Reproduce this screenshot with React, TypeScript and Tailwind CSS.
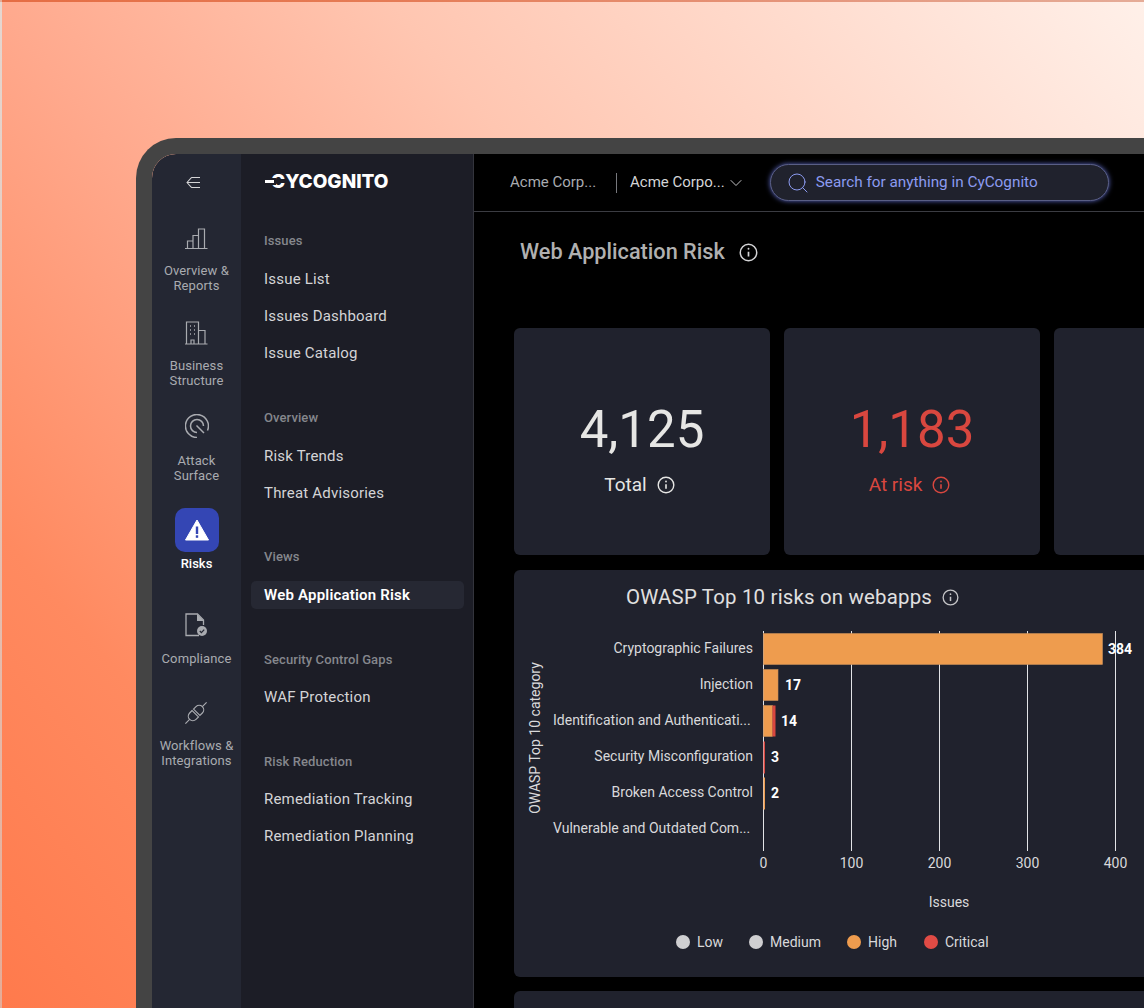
import React from "react";
import { ChevronDown, Search } from "lucide-react";

const DIN = "font-['Roboto',sans-serif]";

function InfoIcon({ className }: { className?: string }) {
  return (
    <svg viewBox="0 0 18 18" fill="none" stroke="currentColor" strokeWidth="1.4" className={className}>
      <circle cx="9" cy="9" r="7.8" />
      <path d="M9 8.2v4.6" strokeWidth="1.6" />
      <circle cx="9" cy="5.5" r="0.9" fill="currentColor" stroke="none" />
    </svg>
  );
}

const railStroke = { fill: "none", stroke: "currentColor", strokeWidth: 1.2 };

const BarsIcon = () => (
  <svg viewBox="0 0 24 24" className="w-6 h-6" {...railStroke}>
    <path d="M1 22.5h22.5M3.5 22.5V15H9v7.5M9 22.5v-13h5.5v13M14.5 22.5V3h6v19.5" />
  </svg>
);
const BuildingIcon = () => (
  <svg viewBox="0 0 24 24" className="w-6 h-6" {...railStroke}>
    <path d="M1 23h22.5M2.5 23V1h12v22M14.5 9.5H21V23M7 23v-4h3v4" />
    <path d="M6 5h1M10 5h1M6 9h1M10 9h1M6 13h1M10 13h1" strokeWidth="1.5" />
  </svg>
);
const TargetIcon = () => (
  <svg viewBox="0 0 24 24" className="w-6 h-6" {...railStroke} strokeWidth="1.5">
    <path d="M12 23.5A11.5 11.5 0 1 1 22.5 16.5" />
    <path d="M12 18.5A6.5 6.5 0 1 1 18.5 12" />
    <path d="M11.5 11.5l7.5 7.5" />
  </svg>
);
const FileCheckIcon = () => (
  <svg viewBox="0 0 24 24" className="w-6 h-6">
    <path d="M15 22.5H2V1h11.5l6 6v5" fill="none" stroke="currentColor" strokeWidth="1.3" />
    <path d="M13 1l7 7h-7z" fill="currentColor" />
    <circle cx="18" cy="18" r="5" fill="currentColor" />
    <path d="M15.8 18l1.6 1.6 2.8-3" fill="none" stroke="#242733" strokeWidth="1.3" />
  </svg>
);
const PlugIcon = () => (
  <svg viewBox="0 0 24 24" className="w-6 h-6 overflow-visible" {...railStroke}>
    <g transform="rotate(45 12 12)">
      <path d="M7.5 11V7.5a4.5 4.5 0 0 1 9 0V11z" />
      <path d="M7.5 13v3.500a4.500 4.500 0 0 0 9 0V13z" />
      <path d="M12 3V-3M12 21v6" />
    </g>
  </svg>
);

function RailItem({ icon, label, className, gap }: { icon: React.ReactNode; label: string[]; className: string; gap: string }) {
  return (
    <div className={`flex flex-col items-center text-[#a9abb0] ${className}`}>
      {icon}
      <div className={`${gap} text-[13px] leading-[15px] text-center tracking-[0.1px]`}>
        {label.map((l) => (
          <div key={l}>{l}</div>
        ))}
      </div>
    </div>
  );
}

function NavGroup({
  title,
  items,
  active,
  className,
  listGap = "mt-[13px]",
}: {
  title: string;
  items: string[];
  active?: string;
  className?: string;
  listGap?: string;
}) {
  return (
    <div className={className}>
      <div className="h-[16px] leading-[16px] pl-[23px] text-[13px] tracking-[0.1px] font-medium text-[#85878d]">{title}</div>
      <div className={`${listGap} flex flex-col gap-[3px]`}>
        {items.map((i) => (
          <div
            key={i}
            className={
              i === active
                ? "h-[28px] my-[3px] leading-[28px] ml-[10px] mr-[9px] pl-[13px] rounded-[5px] bg-[#262833] text-white text-[15px] tracking-[0.2px] font-semibold"
                : "h-[34px] leading-[34px] pl-[23px] text-[15px] tracking-[0.2px] text-[#d4d4d6]"
            }
          >
            {i}
          </div>
        ))}
      </div>
    </div>
  );
}

function StatCard({ value, label, tone }: { value: string; label: string; tone: string }) {
  return (
    <div className={`w-[256px] h-[227px] shrink-0 rounded-[6px] bg-[#20222d] flex flex-col items-center pt-[71px] ${tone}`}>
      <div className="text-[51px] leading-[62px] font-normal">{value}</div>
      <div className="mt-[12px] pr-[5px] flex items-center gap-[10px] text-[19px] leading-[24px]">
        {label}
        <InfoIcon className="w-[18px] h-[18px]" />
      </div>
    </div>
  );
}

const rows = [
  { name: "Cryptographic Failures", y: 648, value: "384", vx: 1108 },
  { name: "Injection", y: 684, value: "17", vx: 785 },
  { name: "Identification and Authenticati...", y: 720, value: "14", vx: 781 },
  { name: "Security Misconfiguration", y: 756, value: "3", vx: 771 },
  { name: "Broken Access Control", y: 792, value: "2", vx: 771 },
  { name: "Vulnerable and Outdated Com...", y: 828 },
];

function OwaspChart() {
  const ticks = [
    { x: 763.5, t: "0" },
    { x: 851.5, t: "100" },
    { x: 939.5, t: "200" },
    { x: 1027.5, t: "300" },
    { x: 1115.5, t: "400" },
  ];
  return (
    <svg width="640" height="407" viewBox="514 570 640 407" className="block font-['Roboto',sans-serif]">
      {ticks.map((t) => (
        <g key={t.t}>
          <line x1={t.x} x2={t.x} y1="631" y2="851" stroke="#e2e3e6" strokeWidth="1" />
          <text x={t.x} y="868" textAnchor="middle" fontSize="14" fill="#d9d9db">
            {t.t}
          </text>
        </g>
      ))}
      <g stroke="#c98f5a" strokeWidth="0.6">
        <rect x="763.5" y="633.5" width="339" height="31" fill="#ee9c4e" />
        <rect x="763.5" y="669.5" width="14.5" height="31" fill="#ee9c4e" />
        <rect x="763.5" y="705.5" width="9" height="31" fill="#ee9c4e" />
      </g>
      <rect x="772.5" y="705.5" width="3" height="31" fill="#d9473f" />
      <rect x="763.5" y="741.5" width="1.5" height="32" fill="#d9473f" />
      <rect x="763.5" y="777.5" width="1.5" height="32" fill="#ee9c4e" />
      {rows.map((r) => (
        <g key={r.name}>
          <text
            x={r.name.endsWith("...") ? 553 : 753}
            y={r.y + 5}
            textAnchor={r.name.endsWith("...") ? "start" : "end"}
            fontSize="14"
            fill="#d9d9db"
          >
            {r.name}
          </text>
          {r.value && (
            <text x={r.vx} y={r.y + 6} fontSize="14" fontWeight="700" fill="#fff">
              {r.value}
            </text>
          )}
        </g>
      ))}
      <text transform="translate(540 738) rotate(-90)" textAnchor="middle" fontSize="14" fill="#d9d9db">
        OWASP Top 10 category
      </text>
      <text x="949" y="907" textAnchor="middle" fontSize="14" fill="#d9d9db">
        Issues
      </text>
    </svg>
  );
}

function Legend() {
  const items = [
    { c: "bg-[#cfcfd1]", t: "Low", w: "w-[73px]" },
    { c: "bg-[#cfcfd1]", t: "Medium", w: "w-[98px]" },
    { c: "bg-[#ee9c4e]", t: "High", w: "w-[77px]" },
    { c: "bg-[#e04b45]", t: "Critical", w: "w-[80px]" },
  ];
  return (
    <div className="absolute left-[162px] top-[364px] flex items-center font-['Roboto',sans-serif]">
      {items.map((i) => (
        <div key={i.t} className={`flex items-center gap-[7px] ${i.w}`}>
          <span className={`w-[14px] h-[14px] rounded-full ${i.c}`} />
          <span className="text-[14px] leading-[16px] text-[#d9d9db]">{i.t}</span>
        </div>
      ))}
    </div>
  );
}

export default function App() {
  return (
    <div className="relative w-[1144px] h-[1008px] overflow-hidden pt-[136px] pl-[134px] border-l-2 border-t-2 border-black/10 bg-[linear-gradient(50deg,#ff7a4c_0%,#ff8a60_20%,#ffa98d_42%,#ffc6b1_62%,#fff0e9_100%)]">
      <div className={`flex w-[1024px] h-[900px] rounded-tl-[40px] border-l-[16px] border-t-[16px] border-[#444444] overflow-hidden ${DIN}`}>
        {/* icon rail */}
        <div className="w-[89px] shrink-0 bg-[#242733] flex flex-col items-center rounded-tl-[24px]">
          <svg viewBox="0 0 16 14" className="w-[15px] h-[13px] mt-[22px] mr-[6px] text-[#d4d4d6]" fill="none" stroke="currentColor" strokeWidth="1.1">
            <path d="M6 1.5L1 7l5 5.5M1 7h14M6 1.5h9M6 12.5h9" />
          </svg>
          <RailItem icon={<BarsIcon />} label={["Overview &", "Reports"]} className="mt-[37px]" gap="mt-[13px]" />
          <RailItem icon={<BuildingIcon />} label={["Business", "Structure"]} className="mt-[28px]" gap="mt-[13px]" />
          <RailItem icon={<TargetIcon />} label={["Attack", "Surface"]} className="mt-[26px]" gap="mt-[15px]" />
          <div className="mt-[25px] flex flex-col items-center">
            <div className="w-[44px] h-[44px] rounded-[10px] bg-[#3446b4] flex items-center justify-center">
              <svg viewBox="0 0 24 22" className="w-[24px] h-[22px]">
                <path d="M12 1L23.5 21H.5z" fill="#fff" stroke="#fff" strokeLinejoin="round" />
                <rect x="10.8" y="7.5" width="2.4" height="7.5" fill="#3446b4" />
                <rect x="10.8" y="16.3" width="2.4" height="2.5" fill="#3446b4" />
              </svg>
            </div>
            <div className="mt-[4px] text-[13px] leading-[15px] text-white font-medium">Risks</div>
          </div>
          <RailItem icon={<FileCheckIcon />} label={["Compliance"]} className="mt-[42px]" gap="mt-[14px]" />
          <RailItem icon={<PlugIcon />} label={["Workflows &", "Integrations"]} className="mt-[35px]" gap="mt-[13px]" />
        </div>

        {/* section nav */}
        <div className="w-[233px] shrink-0 bg-[#1c1d26] border-r border-[#33343c]">
          <div className="h-[79px] pl-[24px] pt-[16px] relative">
            <div className="pl-[6px] text-[19px] leading-[24px] font-extrabold text-white font-['Inter',sans-serif]">CYCOGNITO</div>
            <span className="absolute left-[24px] top-[26px] w-[9px] h-[3px] bg-white shadow-[0_0_0_2px_#1c1d26]" />
          </div>
          <NavGroup title="Issues" items={["Issue List", "Issues Dashboard", "Issue Catalog"]} />
          <NavGroup title="Overview" items={["Risk Trends", "Threat Advisories"]} className="mt-[40px]" />
          <NavGroup title="Views" items={["Web Application Risk"]} active="Web Application Risk" className="mt-[39px]" />
          <NavGroup title="Security Control Gaps" items={["WAF Protection"]} className="mt-[40px]" listGap="mt-[12px]" />
          <NavGroup title="Risk Reduction" items={["Remediation Tracking", "Remediation Planning"]} className="mt-[40px]" listGap="mt-[12px]" />
        </div>

        {/* main */}
        <div className="flex-1 min-w-0 bg-black">
          <div className="h-[58px] border-b border-[#3b3c42] flex items-center pl-[36px] w-[671px]">
            <span className="text-[15px] text-[#a9abb0] w-[88px]">Acme Corp...</span>
            <span className="w-px h-[20px] bg-[#77787d] ml-[18px]" />
            <span className="ml-[13px] text-[15px] text-[#d4d4d6]">Acme Corpo...</span>
            <ChevronDown className="w-[20px] h-[20px] ml-[1px] text-[#d4d4d6]" strokeWidth={1.1} />
            <div className="ml-[24px] w-[339px] h-[37px] rounded-full border border-[#5a5f86] bg-[#20222d] shadow-[0_0_5px_#5b67c0] flex items-center pl-[15px] gap-[6px] text-[#8c9bf0]">
              <Search className="w-[24px] h-[24px]" strokeWidth={1} />
              <span className="text-[15.3px]">Search for anything in CyCognito</span>
            </div>
          </div>
          <div className="pl-[40px] pt-[24px]">
            <div className="flex items-center gap-[14px] h-[32px] pl-[6px] text-[#b0b0b0]">
              <span className="text-[21.7px] font-medium leading-[32px]">Web Application Risk</span>
              <InfoIcon className="w-[19px] h-[19px] text-[#d4d4d6]" />
            </div>
            <div className="mt-[60px] flex gap-[14px] w-[700px]">
              <StatCard value="4,125" label="Total" tone="text-[#e6e6e4]" />
              <StatCard value="1,183" label="At risk" tone="text-[#d9473f]" />
              <div className="w-[256px] h-[227px] shrink-0 rounded-[6px] bg-[#20222d]" />
            </div>
            <div className="relative mt-[15px] w-[640px] h-[407px] rounded-[6px] bg-[#20222d]">
              <div className="absolute left-[112px] top-[13px] flex items-center gap-[10px] text-[#e0e0e0] font-['Roboto',sans-serif]">
                <span className="text-[20.4px] leading-[28px] tracking-[0.2px]">OWASP Top 10 risks on webapps</span>
                <InfoIcon className="w-[17px] h-[17px] text-[#c4c4c6]" />
              </div>
              <OwaspChart />
              <Legend />
            </div>
            <div className="mt-[14px] w-[640px] h-[60px] rounded-[6px] bg-[#20222d]" />
          </div>
        </div>
      </div>
    </div>
  );
}
